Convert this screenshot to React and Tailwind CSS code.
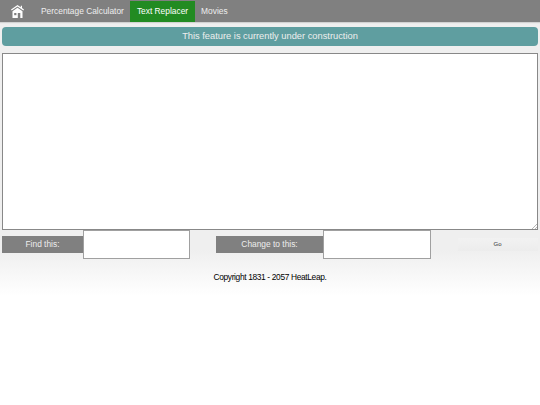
function HomeIcon() {
  return (
    <svg width="13" height="13" viewBox="0 0 13 13" className="block">
      <path fill="#fff" d="M6.5 0 L9.8 2.2 V0.8 H11 V3 L13 4.5 L12.3 5.4 L6.5 1.5 L0.7 5.4 L0 4.5 Z" />
      <path fill="#fff" d="M6.5 2.8 L11.5 6.2 V13 H9.3 V8 H6.8 V13 H1.5 V6.2 Z" />
      <rect x="3.2" y="8" width="2.2" height="2.2" fill="#808080" />
    </svg>
  );
}

function NavLink({ children, active }) {
  return (
    <a className={active ? "flex h-full items-center bg-[#228b22] px-[6.5px] text-white" : "flex h-full items-center px-[6.5px] text-[#eeeeee]"}>
      {children}
    </a>
  );
}

export default function App() {
  return (
    <div className="min-h-[405px] bg-[linear-gradient(to_bottom,#efefef_0px,#efefef_250px,#ffffff_296px)] font-['Liberation_Sans',Arial,sans-serif]">
      <nav className="flex h-[22px] items-center bg-[#808080] pl-[11px] pt-[1px] text-[8.4px] shadow-[0_1px_1px_rgba(0,0,0,0.12)]">
        <span className="mr-[10.5px] flex w-[13px] items-center"><HomeIcon /></span>
        <NavLink>Percentage Calculator</NavLink>
        <NavLink active>Text Replacer</NavLink>
        <NavLink>Movies</NavLink>
      </nav>
      <div className="mx-[2px] mt-[5px] flex h-[19px] items-center justify-center rounded-[4px] bg-[#5f9ea0] text-[9.3px] text-[#eeeeee]">
        This feature is currently under construction
      </div>
      <div className="relative mx-[2px] mt-[7px] h-[177px] border border-[#888888] bg-white">
        <svg width="6" height="6" viewBox="0 0 6 6" className="absolute bottom-0 right-0">
          <path d="M1 6 L6 1 M4 6 L6 4" stroke="#888888" strokeWidth="0.6" />
        </svg>
      </div>
      <div className="mx-[2px] flex h-[29px] items-center">
        <div className="flex h-[17px] w-[81px] items-center justify-center bg-[#808080] text-[8.4px] text-[#eeeeee]">Find this:</div>
        <div className="h-[29px] w-[107px] border border-b-[1.5px] border-[#a0a0a0] bg-white" />
        <div className="w-[26px]" />
        <div className="flex h-[17px] w-[107px] items-center justify-center bg-[#808080] text-[8.4px] text-[#eeeeee]">Change to this:</div>
        <div className="h-[29px] w-[108px] border border-b-[1.5px] border-[#a0a0a0] bg-white" />
        <div className="w-[27px]" />
        <button className="flex h-[13px] w-[80px] items-center justify-center bg-[linear-gradient(to_bottom,#f2f2f2,#ececec)] pr-[1px] text-[6px] text-[#333333]">Go</button>
      </div>
      <p className="mt-[13px] text-center text-[8.4px] leading-[11px] tracking-[-0.35px] text-black">Copyright 1831 - 2057 HeatLeap.</p>
    </div>
  );
}
